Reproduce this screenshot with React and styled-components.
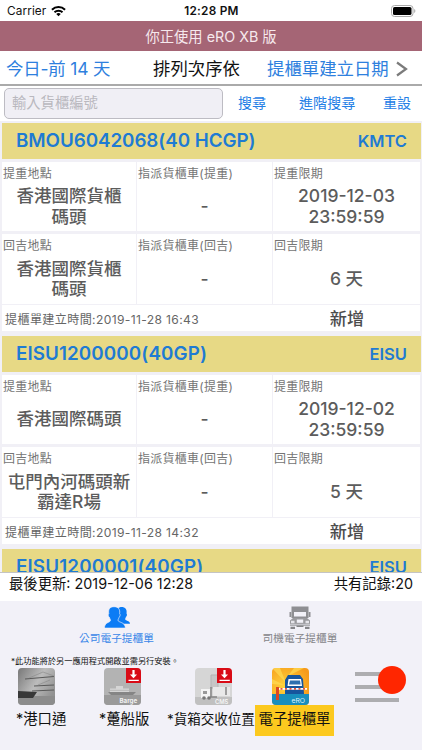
import React from 'react';
import styled, { createGlobalStyle } from 'styled-components';

const GlobalStyle = createGlobalStyle`
  * {
    box-sizing: border-box;
  }
  body {
    margin: 0;
    background: #f2f1f8;
    font-family: Inter, 'Noto Sans CJK TC', sans-serif;
    color: #111;
  }
`;

const Screen = styled.div`
  display: flex;
  flex-direction: column;
  width: 422px;
  height: 750px;
  overflow: hidden;
`;

const StatusBar = styled.div`
  display: grid;
  grid-template-columns: 1fr auto 1fr;
  align-items: center;
  height: 21px;
  padding: 0 6px 0 7px;
  background: #fff;
  font-size: 11.8px;
  line-height: 20px;
`;

const Carrier = styled.div`
  display: flex;
  align-items: center;
  gap: 5px;
  letter-spacing: 0.1px;
`;

const Clock = styled.div`
  font-weight: 600;
  letter-spacing: 0.25px;
`;

const BatteryWrap = styled.div`
  display: flex;
  justify-content: flex-end;
`;

const Banner = styled.div`
  height: 30px;
  padding-top: 1px;
  background: #a56575;
  color: #f6e9ed;
  font-size: 14.3px;
  line-height: 30px;
  text-align: center;
`;

const SortBar = styled.div`
  display: flex;
  align-items: center;
  height: 35px;
  padding: 2px 14px 0 6px;
  background: #fff;
  border-bottom: 2px solid #aaa;
  font-size: 17.4px;
  line-height: 31px;
  white-space: nowrap;
`;

const SortLink = styled.div`
  width: ${(props) => props.width};
  color: #2e80de;
  letter-spacing: ${(props) => props.spacing || 'normal'};
`;

const SortLabel = styled.div`
  width: 114px;
  color: #111;
`;

const SearchBar = styled.div`
  display: flex;
  align-items: center;
  height: 35px;
  padding: 0 11px 0 4px;
  background: #fff;
`;

const SearchInput = styled.input`
  width: 219px;
  height: 31px;
  margin-right: 15px;
  padding: 0 7px 2px;
  border: 1px solid #bdbcc3;
  border-radius: 5px;
  background: #f0eff5;
  font: inherit;
  font-size: 14.3px;
  outline: none;
  &::placeholder {
    color: #b9b8be;
    opacity: 1;
  }
`;

const SearchLink = styled.div`
  width: ${(props) => props.width};
  flex: none;
  margin-top: -3px;
  color: #2580e6;
  font-size: 14.1px;
  white-space: nowrap;
`;

const List = styled.div`
  height: 451px;
  padding: 2px 1px 0 2px;
  background: #f1f0f6;
  overflow: hidden;
`;

const Card = styled.div`
  height: 213px;
`;

const CardHead = styled.div`
  display: flex;
  justify-content: space-between;
  height: 36px;
  padding: 0 14px;
  background: #e7d985;
  color: #1f7bd3;
  font-size: 18.8px;
  font-weight: 600;
  line-height: 36px;
`;

const HeadCode = styled.div`
  font-size: 16.5px;
`;

const CellRow = styled.div`
  display: grid;
  grid-template-columns: 134px 135px 147px;
  gap: 1px;
  height: ${(props) => props.height};
  margin-top: 3px;
`;

const Cell = styled.div`
  display: flex;
  flex-direction: column;
  padding: 4px 0 0 1px;
  background: #fff;
`;

const CellLabel = styled.div`
  height: 15px;
  color: #757575;
  font-size: 12px;
  letter-spacing: 0.25px;
  line-height: 15px;
  white-space: nowrap;
`;

const CellValue = styled.div`
  display: flex;
  flex: 1;
  align-items: center;
  justify-content: center;
  padding: 1px 1px 0 0;
  color: #5c5c5c;
  font-size: 17.5px;
  font-weight: 500;
  line-height: 20.5px;
  text-align: center;
  white-space: pre-line;
`;

const CardFoot = styled.div`
  display: flex;
  align-items: center;
  width: 418px;
  height: 26px;
  margin-top: 1px;
  padding-left: 3px;
  background: #fff;
`;

const CreatedAt = styled.div`
  width: 271px;
  color: #666;
  font-size: 12.1px;
  letter-spacing: 0.35px;
`;

const State = styled.div`
  width: 147px;
  padding-top: 2px;
  color: #4c4c4c;
  font-size: 17.2px;
  font-weight: 500;
  line-height: 24px;
  text-align: center;
`;

const Summary = styled.div`
  display: flex;
  justify-content: space-between;
  height: 29px;
  padding: 0 9px;
  border-top: 1px solid #c4c4c4;
  background: #fff;
  font-size: 14.35px;
  line-height: 21px;
`;

const Tabs = styled.div`
  display: grid;
  grid-template-columns: 233px 134px;
  height: 54px;
  padding-top: 5px;
`;

const Tab = styled.div`
  display: flex;
  flex-direction: column;
  align-items: center;
  color: ${(props) => (props.$active ? '#3a87e8' : '#858589')};
  font-size: 10.7px;
  line-height: 17px;
`;

const TabIcon = styled.svg`
  display: block;
  width: 26px;
  height: 24px;
`;

const Notice = styled.div`
  height: 13px;
  padding-left: 11px;
  font-size: 8.2px;
  line-height: 13px;
`;

const AppBar = styled.div`
  display: flex;
`;

const AppItem = styled.div`
  display: flex;
  flex-direction: column;
  width: ${(props) => props.width};
  margin-left: ${(props) => props.gap || 0};
  font-size: ${(props) => props.size || '14.4px'};
  white-space: nowrap;
`;

const AppIconBox = styled.div`
  padding-left: ${(props) => props.offset};
`;

const AppIcon = styled.svg`
  display: block;
  width: 37px;
  height: 37px;
  border-radius: 4px;
`;

const AppName = styled.div`
  width: 100%;
  height: 31px;
  background: ${(props) => (props.$active ? '#fcc91f' : 'transparent')};
  line-height: 28px;
  text-align: center;
`;

const MenuIcon = styled.svg`
  display: block;
  width: 54px;
  height: 40px;
  margin: -4px 0 0 20px;
`;

const orders = [
  {
    id: 'BMOU6042068(40 HCGP)',
    code: 'KMTC',
    spacing: '-0.06px',
    pickup: '香港國際貨櫃\n碼頭',
    pickupLimit: '2019-12-03\n23:59:59',
    dropoff: '香港國際貨櫃\n碼頭',
    dropoffLimit: '6 天',
    created: '2019-11-28 16:43',
  },
  {
    id: 'EISU1200000(40GP)',
    code: 'EISU',
    spacing: '0.1px',
    pickup: '香港國際碼頭',
    pickupLimit: '2019-12-02\n23:59:59',
    dropoff: '屯門內河碼頭新\n霸達R場',
    dropoffLimit: '5 天',
    created: '2019-11-28 14:32',
  },
  {
    id: 'EISU1200001(40GP)',
    code: 'EISU',
    spacing: '0.15px',
  },
];

const HeadId = styled.div`
  letter-spacing: ${(props) => props.spacing};
`;

const Field = ({ label, value }) => (
  <Cell>
    <CellLabel>{label}</CellLabel>
    <CellValue>{value}</CellValue>
  </Cell>
);

const Order = ({ order }) => (
  <Card>
    <CardHead>
      <HeadId spacing={order.spacing}>{order.id}</HeadId>
      <HeadCode>{order.code}</HeadCode>
    </CardHead>
    {order.created && (
      <>
        <CellRow height='69px'>
          <Field label='提重地點' value={order.pickup} />
          <Field label='指派貨櫃車(提重)' value='-' />
          <Field label='提重限期' value={order.pickupLimit} />
        </CellRow>
        <CellRow height='70px'>
          <Field label='回吉地點' value={order.dropoff} />
          <Field label='指派貨櫃車(回吉)' value='-' />
          <Field label='回吉限期' value={order.dropoffLimit} />
        </CellRow>
        <CardFoot>
          <CreatedAt>提櫃單建立時間:{order.created}</CreatedAt>
          <State>新增</State>
        </CardFoot>
      </>
    )}
  </Card>
);

const Wifi = () => (
  <svg width='15' height='12' viewBox='0 0 16 12'>
    <g fill='none' stroke='#000' strokeWidth='2.1'>
      <path d='M1 4.6a10 10 0 0 1 14 0' />
      <path d='M3.7 7.4a6.2 6.2 0 0 1 8.6 0' />
    </g>
    <path d='M5.6 9.2a3.5 3.5 0 0 1 4.8 0L8 11.6z' />
  </svg>
);

const Battery = () => (
  <svg width='25' height='12' viewBox='0 0 25 12'>
    <rect x='0.5' y='0.5' width='21.5' height='11' rx='3' fill='none' stroke='#aaa' />
    <rect x='2' y='2' width='18.5' height='8' rx='1.6' />
    <path d='M23.2 4v4c1.6-.6 1.6-3.4 0-4z' fill='#aaa' />
  </svg>
);

const DownloadBadge = () => (
  <g>
    <path d='M22 0h15v15H22z' fill='#d90b16' />
    <path d='M29.5 2v6' stroke='#fff' strokeWidth='2.2' />
    <path d='M26 6.5h7l-3.5 3.8z' fill='#fff' />
    <path d='M24.5 12.4h10.3' stroke='#fff' strokeWidth='1.4' />
  </g>
);

const PortIcon = () => (
  <AppIcon viewBox='0 0 37 37'>
    <defs>
      <linearGradient id='port' x1='0' y1='0' x2='1' y2='0.6'>
        <stop offset='0' stopColor='#777' />
        <stop offset='0.55' stopColor='#bcbcbc' />
        <stop offset='1' stopColor='#929292' />
      </linearGradient>
    </defs>
    <path d='M0 0h37v37H0z' fill='url(#port)' />
    <path d='M0 28h37v9H0z' fill='#8c8c8c' />
    <path d='M0 23l19 1-4 6H0z' fill='#383838' />
    <path d='M7 11l29-2.5M16 18l20-1M14 23l22-1' stroke='#5a5a5a' strokeWidth='1.2' />
    <path d='M11 10L25 4l11 4M20 17l12-5' fill='none' stroke='#888' strokeWidth='0.6' />
  </AppIcon>
);

const BargeIcon = () => (
  <AppIcon viewBox='0 0 37 37'>
    <path d='M0 0h37v37H0z' fill='#b3b3b3' />
    <path d='M0 27h37v10H0z' fill='#9a9a9a' />
    <path d='M4 24h28l-3 3H7z' fill='#858585' />
    <path d='M6 20.5h19V24H6zM12 18h7v3h-7z' fill='#d5d5d5' />
    <path d='M6 22.3h19' stroke='#aaa' strokeWidth='0.7' />
    <text x='15.5' y='34.5' fill='#f2f2f2' fontSize='6.2' fontWeight='700'>Barge</text>
    <DownloadBadge />
  </AppIcon>
);

const CmsIcon = () => (
  <AppIcon viewBox='0 0 37 37'>
    <path d='M0 0h37v37H0z' fill='#d6d6d6' />
    <path d='M0 29h37v8H0z' fill='#c0c0c0' />
    <path d='M16 7h7v13h-7z' fill='#c6c6c6' stroke='#b3b3b3' />
    <path d='M6 21h9v9H6z' fill='#f4f4f4' />
    <path d='M18 19h17v9H18z' fill='#e9e9e9' />
    <path d='M8 23h4v3H8z' fill='#999' />
    <path d='M16 19v10M15 29h7M31 19v8' fill='none' stroke='#858585' strokeWidth='1.5' />
    <circle cx='9' cy='30' r='1.8' fill='#777' />
    <circle cx='14' cy='30' r='1.8' fill='#777' />
    <text x='20' y='35.5' fill='#f5f5f5' fontSize='5.8' fontWeight='600'>CMS</text>
    <DownloadBadge />
  </AppIcon>
);

const EroIcon = () => (
  <AppIcon viewBox='0 0 37 37'>
    <defs>
      <radialGradient id='ero' cx='0.35' cy='0.5' r='0.7'>
        <stop offset='0' stopColor='#ffd43c' />
        <stop offset='1' stopColor='#f69a1a' />
      </radialGradient>
    </defs>
    <path d='M0 0h37v37H0z' fill='url(#ero)' />
    <path d='M0 0l14 15L8 0zM22 0l-6 8L32 0zM0 11l12 6L0 16z' fill='#ffdb54' opacity='0.7' />
    <path d='M0 26h37v11H0z' fill='#188ebd' />
    <path d='M13 12l3-5h12l3 4 1 15H13z' fill='#17559d' />
    <path d='M16.5 11H29l1 7H15.5z' fill='#fff' />
    <path d='M18 12.5h10l.6 4H17z' fill='#2f6fae' />
    <path d='M4 20.8h31' stroke='#fff' strokeWidth='1.8' />
    <path d='M4 20.8h31' stroke='#e2553f' strokeWidth='1.8' strokeDasharray='2 2.5' />
    <path d='M4 19h3v13H4z' fill='#d94624' />
    <text x='19.5' y='34.5' fill='#dff2fb' fontSize='6.8'>eRO</text>
  </AppIcon>
);

const PeopleIcon = () => (
  <TabIcon viewBox='0 0 26 24' fill='#0c7cf5'>
    <path d='M17.5 1c3.8 0 5.8 2.6 5 6.4.9.9.4 2.8-.5 3.3-.4 1.5-1.4 2.2-.4 3.300 1.800 1 4.300 1.200 4.400 3.700h-12V2.500C15 1.500 16.200 1 17.500 1z' />
    <path
      d='M10 .7c4.500 0 6.300 2.900 5.600 6.900 1 .9.500 3.200-.6 3.700-.4 1.900-1.600 2.600-.5 3.900 2.200 1.500 6.700 1.600 6.900 6.900H.4c.2-5.300 4.200-5.400 5.700-6.900 1.100-1.300-.3-2-.7-3.900-1.100-.5-1.600-2.800-.6-3.700C4.100 3.600 5.500.7 10 .7z'
      stroke='#f2f1f8'
      strokeWidth='0.7'
    />
  </TabIcon>
);

const TruckIcon = () => (
  <TabIcon viewBox='0 0 26 24'>
    <path d='M4.5.5h17V12h-17z' fill='#8f8f93' />
    <path d='M7 6h12v4.500H7z' fill='#f2f1f8' />
    <path d='M3.4 6v5M22.6 6v5' stroke='#8f8f93' strokeWidth='1.8' />
    <path d='M6 12h14l3 2.500v5.300H3v-5.300z' fill='#9a9a9e' />
    <path d='M9.8 13.5h6.400v3.300H9.800z' fill='#f2f1f8' />
    <path d='M4 14.8h3.500v2.400H4zM18.5 14.8H22v2.400h-3.500z' fill='#e6e5eb' />
    <path d='M3 18.3h20' stroke='#dddce2' strokeWidth='0.8' />
    <path d='M3.5 20.8H8V23H3.500zM18 20.800h4.500V23H18zM9.500 19.500h7v1.500h-7z' fill='#858589' />
  </TabIcon>
);

const App = () => {
  return (
    <>
      <GlobalStyle />
      <Screen>
        <StatusBar>
          <Carrier>
            Carrier
            <Wifi />
          </Carrier>
          <Clock>12:28 PM</Clock>
          <BatteryWrap>
            <Battery />
          </BatteryWrap>
        </StatusBar>
        <Banner>你正使用 eRO XB 版</Banner>
        <SortBar>
          <SortLink width='147px' spacing='-0.15px'>今日-前 14 天</SortLink>
          <SortLabel>排列次序依</SortLabel>
          <SortLink width='129px'>提櫃單建立日期</SortLink>
          <svg width='12' height='16' viewBox='0 0 12 16'>
            <path d='M1 1.5l9 6.500-9 6.500' fill='none' stroke='#7b7b7b' strokeWidth='2.2' />
          </svg>
        </SortBar>
        <SearchBar>
          <SearchInput placeholder='輸入貨櫃編號' />
          <SearchLink width='61px'>搜尋</SearchLink>
          <SearchLink width='84px'>進階搜尋</SearchLink>
          <SearchLink>重設</SearchLink>
        </SearchBar>
        <List>
          {orders.map((order) => (
            <Order key={order.id} order={order} />
          ))}
        </List>
        <Summary>
          <div>最後更新: 2019-12-06 12:28</div>
          <div>共有記錄:20</div>
        </Summary>
        <Tabs>
          <Tab $active>
            <PeopleIcon />
            公司電子提櫃單
          </Tab>
          <Tab>
            <TruckIcon />
            司機電子提櫃單
          </Tab>
        </Tabs>
        <Notice>*此功能將於另一應用程式開啟並需另行安裝。</Notice>
        <AppBar>
          <AppItem width='50px' gap='16px'>
            <AppIconBox offset='2px'>
              <PortIcon />
            </AppIconBox>
            <AppName>*港口通</AppName>
          </AppItem>
          <AppItem width='50px' gap='33px'>
            <AppIconBox offset='5px'>
              <BargeIcon />
            </AppIconBox>
            <AppName>*躉船版</AppName>
          </AppItem>
          <AppItem width='88px' gap='18px' size='13.5px'>
            <AppIconBox offset='28px'>
              <CmsIcon />
            </AppIconBox>
            <AppName>*貨箱交收位置</AppName>
          </AppItem>
          <AppItem width='79px'>
            <AppIconBox offset='17px'>
              <EroIcon />
            </AppIconBox>
            <AppName $active>電子提櫃單</AppName>
          </AppItem>
          <MenuIcon viewBox='0 0 54 40'>
            <path d='M1 10h44M1 23h44M1 36h44' stroke='#adadb0' strokeWidth='4' />
            <circle cx='38' cy='16' r='14' fill='#ff2600' />
          </MenuIcon>
        </AppBar>
      </Screen>
    </>
  );
};

export default App;
